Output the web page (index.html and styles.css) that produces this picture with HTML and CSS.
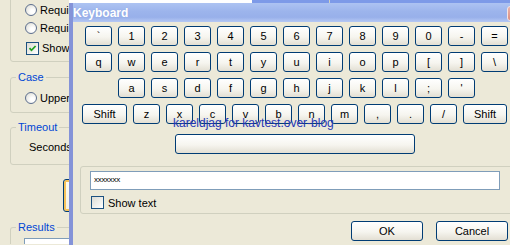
FILE: index.html
```html
<!DOCTYPE html>
<html lang="en">
  <head>
    <meta charset="UTF-8" />
    <title>Keyboard</title>
    <link rel="stylesheet" href="styles.css">
  </head>

  <body>
    <!-- window behind the keyboard dialog -->
    <div class="bg-window">
      <fieldset class="group group--top">
        <label class="opt"><span class="radio"></span>Require uppercase</label>
        <label class="opt"><span class="radio"></span>Require digits</label>
        <label class="opt opt--check">
          <span class="check">
            <svg viewBox="0 0 11 11" class="check-icon">
              <path d="M2.5 5.2 L4.5 7.3 L8.6 3" fill="none" stroke="#21a121" stroke-width="1.8" />
            </svg>
          </span>Show password
        </label>
      </fieldset>

      <fieldset class="group group--case">
        <legend>Case</legend>
        <label class="opt"><span class="radio"></span>Uppercase</label>
      </fieldset>

      <fieldset class="group group--timeout">
        <legend>Timeout</legend>
        <div class="field-row">Seconds</div>
      </fieldset>

      <button class="bg-btn">Generate</button>

      <fieldset class="group group--results">
        <legend>Results</legend>
        <div class="bg-textbox"></div>
      </fieldset>
    </div>

    <!-- keyboard dialog -->
    <div class="dialog">
      <div class="titlebar">
        <span class="title">Keyboard</span>
        <span class="close">
          <svg viewBox="0 0 15 15" class="close-icon">
            <path d="M4.5 4.5 L10.5 10.5 M10.5 4.5 L4.5 10.5" stroke="#fff" stroke-width="2" />
          </svg>
        </span>
      </div>

      <div class="client">
        <div class="keys">
          <div class="key-row">
            <button class="key">`</button>
            <button class="key">1</button>
            <button class="key">2</button>
            <button class="key">3</button>
            <button class="key">4</button>
            <button class="key">5</button>
            <button class="key">6</button>
            <button class="key">7</button>
            <button class="key">8</button>
            <button class="key">9</button>
            <button class="key">0</button>
            <button class="key">-</button>
            <button class="key">=</button>
          </div>
          <div class="key-row">
            <button class="key">q</button>
            <button class="key">w</button>
            <button class="key">e</button>
            <button class="key">r</button>
            <button class="key">t</button>
            <button class="key">y</button>
            <button class="key">u</button>
            <button class="key">i</button>
            <button class="key">o</button>
            <button class="key">p</button>
            <button class="key">[</button>
            <button class="key">]</button>
            <button class="key">\</button>
          </div>
          <div class="key-row key-row--home">
            <button class="key">a</button>
            <button class="key">s</button>
            <button class="key">d</button>
            <button class="key">f</button>
            <button class="key">g</button>
            <button class="key">h</button>
            <button class="key">j</button>
            <button class="key">k</button>
            <button class="key">l</button>
            <button class="key">;</button>
            <button class="key">'</button>
          </div>
          <div class="key-row key-row--shift">
            <button class="key key--shift">Shift</button>
            <button class="key">z</button>
            <button class="key">x</button>
            <button class="key">c</button>
            <button class="key">v</button>
            <button class="key">b</button>
            <button class="key">n</button>
            <button class="key">m</button>
            <button class="key">,</button>
            <button class="key">.</button>
            <button class="key">/</button>
            <button class="key key--shift key--shift-r">Shift</button>
          </div>
        </div>

        <div class="space-row">
          <button class="key key--space"></button>
        </div>

        <fieldset class="entry">
          <div class="entry-input">xxxxxxx</div>
          <label class="entry-check"><span class="box"></span>Show text</label>
        </fieldset>

        <div class="actions">
          <button class="btn">OK</button>
          <button class="btn">Cancel</button>
        </div>
      </div>

      <div class="watermark">kareldjag for kavtest.over-blog</div>
    </div>
  </body>
</html>
```

FILE: styles.css
```css
/* XP classic look: #ece9d8 face, #003c74 button edge, #0046d5 group caption */

* {
  margin: 0;
  padding: 0;
  box-sizing: border-box;
}

body {
  width: 510px;
  height: 245px;
  overflow: hidden;
  position: relative;
  font-family: "Liberation Sans", Arial, sans-serif;
  font-size: 11px;
  color: #000;
  background: linear-gradient(to right, #ece9d8 69px, #fff 69px, #fff 252px, #7d9ae8 252px) 0 0 / 100% 3px no-repeat,
    #ece9d8;
}

/* BACKGROUND WINDOW */
.bg-window {
  width: 330px;
  padding-left: 10px;
  display: flex;
  flex-direction: column;
  align-items: flex-start;
}

.group {
  width: 320px;
  min-width: 0;
  border: 1px solid #d0d0bf;
  border-radius: 3px;
  padding: 0;
}

.group legend {
  color: #0046d5;
  line-height: 13px;
  padding: 0 2px;
  margin-left: 5px;
}

.group--top {
  margin-top: -10px;
  padding: 10px 0 4px;
}
.group--case {
  margin-top: 9px;
  padding: 5px 0 5px;
}
.group--timeout {
  margin-top: 8px;
  padding: 4px 0 8px;
}
.group--results {
  margin-top: 9px;
  padding: 4px 0 0;
  border-bottom: 0;
  border-radius: 3px 3px 0 0;
}

.opt {
  height: 18px;
  display: flex;
  align-items: center;
  gap: 3px;
  padding-left: 14px;
  white-space: nowrap;
}
.opt--check {
  margin-top: 2px;
  padding-left: 15px;
}

.radio {
  width: 12px;
  height: 12px;
  border-radius: 50%;
  border: 1px solid #5d6f8f;
  background: radial-gradient(circle at 65% 65%, #fff 20%, #d9d8cf);
}

.check {
  width: 13px;
  height: 13px;
  border: 1px solid #1c5180;
  background: linear-gradient(135deg, #dcdcd4, #fff);
  display: flex;
}
.check-icon {
  width: 11px;
  height: 11px;
}

.field-row {
  height: 18px;
  line-height: 18px;
  padding-left: 18px;
}

.bg-btn {
  margin: 14px 0 0 53px;
  width: 75px;
  height: 33px;
  border: 1px solid #003c74;
  border-radius: 3px;
  background: linear-gradient(#fffdf4, #f2efe2);
  box-shadow: inset 0 0 0 2px #f6c25a;
  font-family: inherit;
  font-size: 11px;
}

.bg-textbox {
  margin-left: 13px;
  width: 200px;
  height: 6px;
  border: 1px solid #7f9db9;
  border-bottom: 0;
  background-color: #fff;
}

/* KEYBOARD DIALOG */
.dialog {
  position: absolute;
  left: 69px;
  top: 3px;
  width: 441px;
  height: 242px;
  overflow: hidden;
  border-left: 4px solid #8493d8;
  background-color: #ece9d8;
}

.titlebar {
  width: 460px;
  height: 19px;
  padding-top: 1px;
  display: flex;
  align-items: center;
  background: linear-gradient(#adc3f2, #9cb4ec 45%, #98b0ea 75%, #b5c8f4);
}
.title {
  color: #fff;
  font-weight: bold;
  font-size: 12px;
  text-shadow: 0 0 1px #8aa2de;
}
.close {
  margin-left: auto;
  margin-right: 11px;
  width: 15px;
  height: 15px;
  border: 1px solid #f4e4e2;
  border-radius: 3px;
  background: linear-gradient(#eab3aa, #dc8f82);
  display: flex;
}
.close-icon {
  width: 13px;
  height: 13px;
}

.client {
  width: 460px;
  padding: 4px 0 0 12px;
}

.keys {
  display: flex;
  flex-direction: column;
  gap: 6px;
}
.key-row {
  display: flex;
  gap: 6px;
}
.key-row--home {
  padding-left: 33px;
}
.key-row--shift {
  margin-left: -3px;
}

.key,
.btn {
  width: 27px;
  height: 20px;
  border: 1px solid #003c74;
  border-radius: 3px;
  background: linear-gradient(#fff, #f6f5ef 55%, #e3dfd3);
  font-family: inherit;
  font-size: 11px;
  color: #000;
}
.key--shift {
  width: 45px;
}
.key--shift-r {
  width: 44px;
}

.space-row {
  margin-top: 10px;
  padding-left: 90px;
}
.key--space {
  width: 240px;
}

.entry {
  margin: 11px 0 0 -5px;
  border: 1px solid #d0d0bf;
  border-radius: 3px;
  padding: 4px 0 4px 9px;
}
.entry-input {
  width: 410px;
  height: 19px;
  border: 1px solid #7f9db9;
  background-color: #fff;
  padding: 3px 0 0 3px;
  font-size: 8px;
  letter-spacing: -0.3px;
  line-height: 10px;
}
.entry-check {
  margin-top: 6px;
  height: 13px;
  display: flex;
  align-items: center;
  gap: 4px;
  padding-left: 1px;
}
.box {
  width: 13px;
  height: 13px;
  border: 1px solid #1c5180;
  background: linear-gradient(135deg, #dcdcd4, #fff);
}

.actions {
  margin-top: 7px;
  padding-left: 266px;
  display: flex;
  gap: 13px;
}
.btn {
  width: 72px;
}

.watermark {
  position: absolute;
  left: 100px;
  top: 113px;
  font-size: 12px;
  line-height: 14px;
  color: #2436b4;
  white-space: nowrap;
}
```
